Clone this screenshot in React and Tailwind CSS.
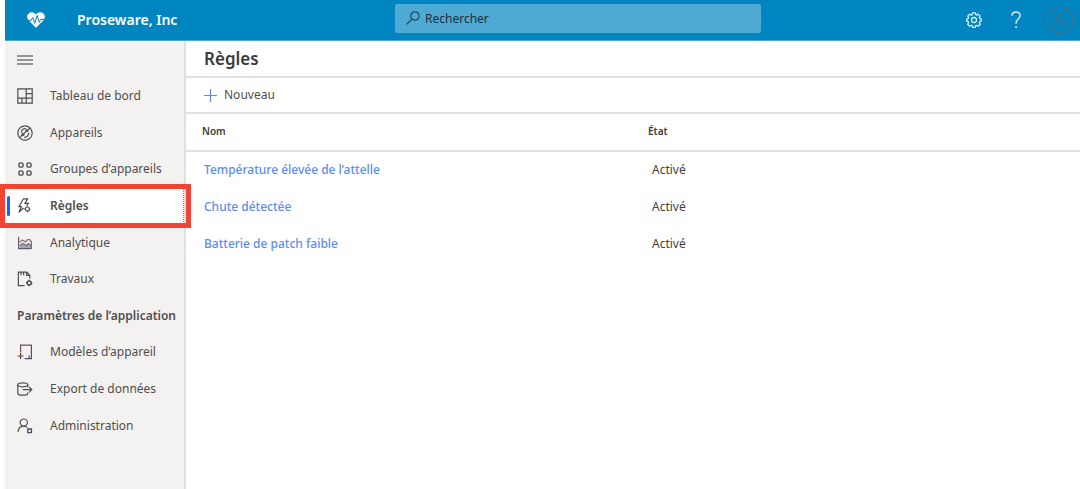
import React from "react";

const stroke = {
  fill: "none",
  stroke: "currentColor",
  strokeWidth: 1.2,
  viewBox: "0 0 16 16",
  "aria-hidden": true,
  className: "size-4 shrink-0",
};

const DashboardIcon = () => (
  <svg {...stroke}>
    <path d="M.8 .8h14.4v14.4H.8zM9.2 .8v14.4M.8 10.2h14.4M9.2 5.6h6M5 10.2v5" />
  </svg>
);
const DevicesIcon = () => (
  <svg {...stroke}>
    <circle cx="8" cy="8" r="7.2" />
    <path d="M2.6 12.6 5.2 10M6.8 8.6 9.2 6.4M10.6 5 13.2 3M4.4 7.4c0-3 2.600-4 4.400-3.600M7 12.200c3 .4 4.600-1.600 4.800-4.400" />
    <circle cx="9.900" cy="5.600" r="1" />
    <circle cx="6" cy="9.400" r="1" />
  </svg>
);
const GroupsIcon = () => (
  <svg {...stroke} strokeWidth="1.3">
    <circle cx="4" cy="4" r="2.2" />
    <circle cx="12" cy="4" r="2.2" />
    <circle cx="4" cy="12" r="2.2" />
    <circle cx="12" cy="12" r="2.2" />
  </svg>
);
const RulesIcon = () => (
  <svg {...stroke}>
    <path d="M1.800 14.400 4.400 8.600H2L6.400.8h4.200L8 5.400h3.400L9.600 7.400M1.800 14.400 6.600 10" />
    <circle cx="10.400" cy="11" r="2" />
    <path d="M10.400 7.800v1.200M10.400 13v1.200M7.300 11h1.100M12.400 11h1.100" />
  </svg>
);
const AnalyticsIcon = () => (
  <svg {...stroke}>
    <path d="M2.800 9.600 6 7.400l3 2.400 2.400-2 2.800 2.600v3H2.800z" fill="#a5a4a8" stroke="none" />
    <path d="M1.600 2v11.600h13" stroke="#5e5c70" />
    <path d="M2.400 7.400 5.400 5l3 2 2.200-2.400h2l1.800 2.200v6.800" stroke="#8b6570" />
    <path d="M3 10.600 6.200 8.400l2.800 2.400 2.400-2.200 2.800 2.400" stroke="#77777f" />
  </svg>
);
const JobsIcon = () => (
  <svg {...stroke}>
    <path d="M7.600 14.600H1.400V1.200h8.400l3 3V7.400M9.600 1.200v3.200h3.200M4 1.200v3M6.600 1.200v3" />
    <circle cx="12.200" cy="12" r="2" strokeWidth="1.600" />
    <path d="M12.200 8.800V10M12.200 14v1.200M9 12h1.200M14.200 12h1.200" />
  </svg>
);
const TemplatesIcon = () => (
  <svg {...stroke}>
    <path d="M3.600 8.600V1.200h10.800" stroke="#7a4a60" />
    <path d="M14.400 .8v13.800H7.600M12.200 14.600v-3" stroke="#4b4f68" />
    <path d="M.6 12h6M3.600 9v6" stroke="#6a3b50" />
  </svg>
);
const ExportIcon = () => (
  <svg {...stroke}>
    <ellipse cx="5.800" cy="3.800" rx="5" ry="2" />
    <path d="M.8 3.800v8.400c0 1.200 2.200 2 5 2s5-.8 5-2v-.8M10.800 3.800v2.400M5.800 8.600h9M12 5.800l2.800 2.800L12 11.400" />
  </svg>
);
const AdminIcon = () => (
  <svg {...stroke}>
    <circle cx="6.800" cy="4.600" r="3.600" />
    <path d="M1 14c.4-3.600 2.600-5.800 5.800-5.800 1.400 0 2.600.6 3.400 1.400" />
    <path d="M10.800 11h3.600v3.600h-3.600z" stroke="#4b4f68" strokeWidth="1.400" />
  </svg>
);

const mainLinks = [
  { label: "Tableau de bord", Icon: DashboardIcon },
  { label: "Appareils", Icon: DevicesIcon },
  { label: "Groupes d’appareils", Icon: GroupsIcon },
  { label: "Règles", Icon: RulesIcon, current: true },
  { label: "Analytique", Icon: AnalyticsIcon },
  { label: "Travaux", Icon: JobsIcon },
];
const settingsLinks = [
  { label: "Modèles d’appareil", Icon: TemplatesIcon },
  { label: "Export de données", Icon: ExportIcon },
  { label: "Administration", Icon: AdminIcon },
];

const rules = [
  { name: "Température élevée de l’attelle", state: "Activé" },
  { name: "Chute détectée", state: "Activé" },
  { name: "Batterie de patch faible", state: "Activé" },
];

function NavItem({ label, Icon, current }) {
  return (
    <li className="relative">
      <a
        href="#"
        aria-current={current ? "page" : undefined}
        className={
          current
            ? "flex h-full items-center gap-[17px] bg-white pl-3"
            : "flex h-full items-center gap-[17px] pl-3"
        }
      >
        <Icon />
        <span className={current ? "font-semibold whitespace-nowrap" : "whitespace-nowrap"}>{label}</span>
      </a>
      {current && (
        <>
          <span className="absolute inset-y-2 left-0.5 w-[3px] rounded-sm bg-[#1565f5]" />
          <span className="pointer-events-none absolute inset-0 border-r border-b border-dotted border-[#4d8df5]" />
          <span className="pointer-events-none absolute -inset-y-1 -right-[7px] -left-[5px] z-10 border-[5px] border-[#f04535]" />
        </>
      )}
    </li>
  );
}

export default function App() {
  return (
    <div className="flex min-h-screen flex-col bg-white pl-[5px] font-['Noto_Sans','Open_Sans',sans-serif] text-xs text-[#4f4e4d]">
      <header className="flex h-[41px] items-center border-b border-[#4ba8d4] bg-[#0085c0] text-white">
        <div className="flex w-[390px] items-center gap-8 pl-[22px]">
          <svg viewBox="0 0 18 16" className="h-4 w-[18px]" aria-hidden="true">
            <path
              fill="#fff"
              d="M9 15.800 1.400 8.200C-.4 6-.2 3 1.600 1.400 3.800-.4 7 0 9 2.600 11 0 14.200-.4 16.400 1.400c1.800 1.600 2 4.600.2 6.800z"
            />
            <path
              d="M0 8.400h4l1.800-3 2 6 2.400-8 2 7 1.400-3H18"
              fill="none"
              stroke="#0085c0"
              strokeWidth="1"
            />
          </svg>
          <span className="text-sm font-semibold">Proseware, Inc</span>
        </div>
        <label className="mb-1 flex h-[29px] w-[34%] items-center gap-1 rounded-xs bg-[#4eaad4] pl-2.5 text-[#1f2d36]">
          <svg viewBox="0 0 16 16" className="size-4" fill="none" stroke="#1f4a60" strokeWidth="1.200" aria-hidden="true">
            <circle cx="10" cy="6" r="4.200" />
            <path d="M7 9 1.600 14.400" />
          </svg>
          <input
            type="search"
            aria-label="Rechercher"
            placeholder="Rechercher"
            className="min-w-0 flex-1 bg-transparent pt-0.5 text-xs outline-none placeholder:text-[#1f2d36]"
          />
        </label>
        <div className="flex flex-1 items-center justify-end gap-[21px] pr-1.5">
          <button type="button" aria-label="Paramètres" className="mr-1">
            <svg viewBox="0 0 16 16" className="size-4" fill="none" stroke="#d5ebf5" strokeWidth="1.300" aria-hidden="true">
              <path
                strokeLinejoin="round"
                d="M6.600.9h2.800l.4 1.800 1 .4 1.500-1 2 2-1 1.500.4 1 1.600.4v2.200l-1.600.5-.4 1 1 1.600-2 2-1.600-1-1 .4-.4 1.600H6.700l-.5-1.600-1-.4-1.600 1-2-2 1-1.600-.4-1L.7 9.200V7l1.600-.4.4-1-1-1.500 2-2 1.500 1 1-.4z"
              />
              <circle cx="8" cy="8" r="2.500" />
            </svg>
          </button>
          <button type="button" aria-label="Aide">
            <svg viewBox="0 0 16 16" className="size-[18px]" fill="none" stroke="#d5ebf5" strokeWidth="1.300" aria-hidden="true">
              <path d="M4.400 4.200C4.400 2 6 .8 8 .8s3.700 1.200 3.700 3.200c0 3-3.600 3.200-3.600 6.400v1" />
              <path d="M7.300 14.400h1.500" strokeWidth="1.600" />
            </svg>
          </button>
          <button type="button" aria-label="Compte">
            <svg viewBox="0 0 28 28" className="size-7" fill="none" stroke="#457487" strokeWidth="1.200" aria-hidden="true">
              <circle cx="14" cy="14" r="13" />
              <circle cx="14" cy="11.500" r="3.800" />
              <path d="M8.600 20.400c.4-3.200 2.600-5 5.400-5s5 1.800 5.400 5" />
            </svg>
          </button>
        </div>
      </header>

      <div className="flex flex-1">
        <nav className="w-[181px] shrink-0 border-r-2 border-[#e1e1e1] bg-[#f3f2f1]">
          <button type="button" aria-label="Menu" className="flex h-[37px] items-center pl-3">
            <svg viewBox="0 0 16 10" className="h-2.5 w-4" aria-hidden="true">
              <path d="M0 1h16M0 5h16M0 9h16" stroke="#777675" strokeWidth="1.300" />
            </svg>
          </button>
          <ul className="grid h-[366px] auto-rows-fr">
            {mainLinks.map((link) => (
              <NavItem key={link.label} {...link} />
            ))}
            <li className="flex items-center pl-3 font-semibold whitespace-nowrap">
              Paramètres de l’application
            </li>
            {settingsLinks.map((link) => (
              <NavItem key={link.label} {...link} />
            ))}
          </ul>
        </nav>

        <main className="min-w-0 flex-1">
          <div className="flex h-[37px] items-center border-b-2 border-[#e1e1e1] pt-0.5 pl-[18px]">
            <h1 className="text-[17px] font-semibold text-[#3b3a39]">Règles</h1>
          </div>
          <div className="flex h-9 items-center border-b-2 border-[#e1e1e1] pl-[18px]">
            <button type="button" className="flex items-center gap-[7px]">
              <svg viewBox="0 0 13 13" className="size-[13px]" aria-hidden="true">
                <path d="M6.500 0v13M0 6.500h13" stroke="#5b8def" strokeWidth="1.200" />
              </svg>
              Nouveau
            </button>
          </div>
          <table className="w-full table-fixed text-left">
            <thead>
              <tr className="h-[37px] border-b-2 border-[#e1e1e1] text-[10px] text-[#3b3a39]">
                <th className="w-1/2 pl-4 font-semibold">Nom</th>
                <th className="w-1/2 pl-[15px] font-semibold">État</th>
              </tr>
            </thead>
            <tbody>
              {rules.map((rule) => (
                <tr key={rule.name} className="h-[37px]">
                  <td className="pl-[18px]">
                    <a href="#" className="font-medium text-[#5b8def]">
                      {rule.name}
                    </a>
                  </td>
                  <td className="pl-[19px] text-[#3f3e3d]">{rule.state}</td>
                </tr>
              ))}
            </tbody>
          </table>
        </main>
      </div>
    </div>
  );
}
